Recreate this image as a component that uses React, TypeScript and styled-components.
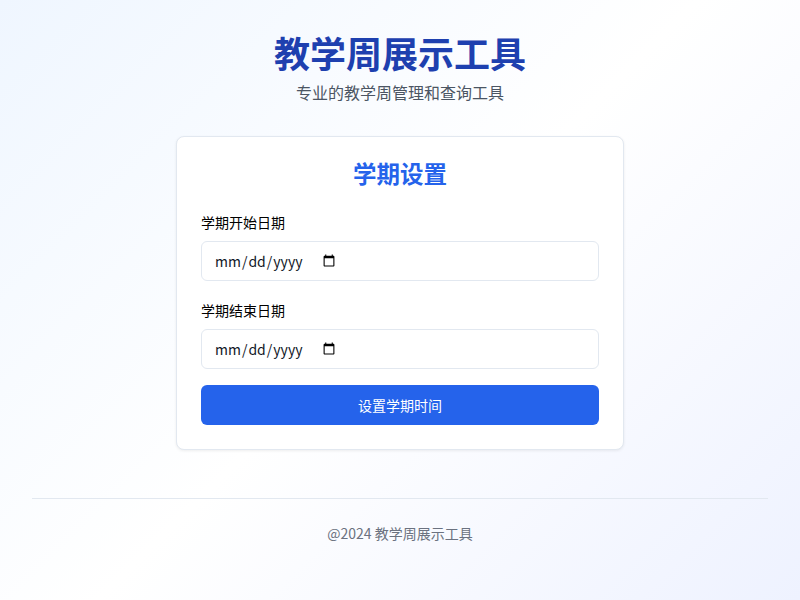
import React from "react";
import styled, { createGlobalStyle } from "styled-components";

const GlobalStyle = createGlobalStyle`
  * {
    box-sizing: border-box;
  }

  html,
  body {
    margin: 0;
    padding: 0;
  }

  body {
    font-family: "Noto Sans CJK SC", "Noto Sans", sans-serif;
    line-height: 1.5;
  }
`;

const Page = styled.div`
  min-height: 600px;
  padding: 32px;
  background: linear-gradient(135deg, #eff6ff 0%, #ffffff 50%, #eef2ff 100%);
`;

const Header = styled.header`
  display: flex;
  flex-direction: column;
  align-items: center;
  margin-bottom: 32px;
`;

const Title = styled.h1`
  margin: 0;
  font-size: 36px;
  line-height: 40px;
  font-weight: 700;
  color: #1e40af;
`;

const Subtitle = styled.p`
  margin: 8px 0 0;
  font-size: 16px;
  line-height: 24px;
  color: #4b5563;
`;

const Card = styled.section`
  width: 448px;
  margin: 0 auto;
  padding: 24px;
  background: #ffffff;
  border: 1px solid #e2e8f0;
  border-radius: 8px;
  box-shadow: 0 1px 3px rgba(0, 0, 0, 0.07);
`;

const CardTitle = styled.h2`
  margin: 0 0 24px;
  font-size: 23.5px;
  line-height: 24px;
  font-weight: 700;
  text-align: center;
  color: #2563eb;
`;

const Field = styled.div`
  margin-bottom: 16px;
`;

const Label = styled.label`
  display: block;
  margin-bottom: 6px;
  font-size: 14px;
  line-height: 26px;
  color: #000000;
`;

const DateBox = styled.div`
  display: flex;
  align-items: center;
  height: 40px;
  padding: 0 12px;
  background: #ffffff;
  border: 1px solid #e2e8f0;
  border-radius: 6px;
`;

const DateInput = styled.input`
  padding: 1px 2px 1px 0;
  font-family: inherit;
  font-size: 14px;
  color: #111827;
  background: transparent;
  border: none;
  outline: none;

  &::-webkit-calendar-picker-indicator {
    margin-left: -1px;
  }
`;

const SubmitButton = styled.button`
  display: block;
  width: 100%;
  height: 40px;
  font-family: inherit;
  font-size: 14px;
  color: #ffffff;
  background: #2563eb;
  border: none;
  border-radius: 6px;
`;

const Footer = styled.footer`
  margin-top: 48px;
  padding-top: 24px;
  border-top: 1px solid #e2e8f0;
  font-size: 14px;
  line-height: 20px;
  text-align: center;
  color: #6b7280;
`;

export default function App() {
  return (
    <>
      <GlobalStyle />
      <Page>
        <Header>
          <Title>教学周展示工具</Title>
          <Subtitle>专业的教学周管理和查询工具</Subtitle>
        </Header>
        <Card>
          <CardTitle>学期设置</CardTitle>
          <Field>
            <Label htmlFor="start">学期开始日期</Label>
            <DateBox>
              <DateInput id="start" type="date" />
            </DateBox>
          </Field>
          <Field>
            <Label htmlFor="end">学期结束日期</Label>
            <DateBox>
              <DateInput id="end" type="date" />
            </DateBox>
          </Field>
          <SubmitButton>设置学期时间</SubmitButton>
        </Card>
        <Footer>@2024 教学周展示工具</Footer>
      </Page>
    </>
  );
}
